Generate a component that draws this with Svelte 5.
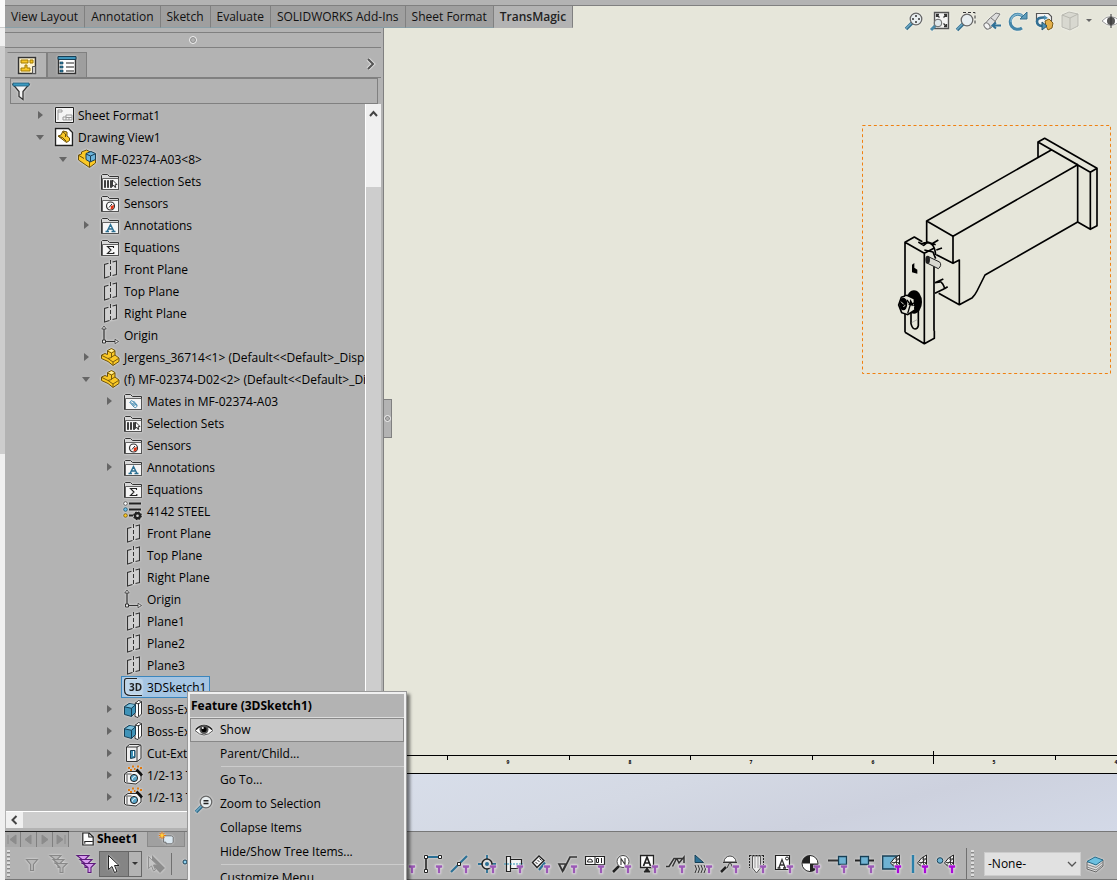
<script>
  const tabs = ['View Layout', 'Annotation', 'Sketch', 'Evaluate', 'SOLIDWORKS Add-Ins', 'Sheet Format', 'TransMagic'];

  const folder = '<path d="M1.5 18.5V4.500l1-1h5l2 2H18.500V18.500z" fill="#d8d8d8" stroke="#333"/><path d="M2.500 7.500H18.500V18.500H2.500z" fill="#f6f6f6" stroke="#444" stroke-width=".8"/>';
  const funnel = '<path d="M12.500 11h7v3h-2v5.500h-3V14h-2z" fill="#9b59b6" stroke="#ddd" stroke-width=".6"/>';
  const brightFunnel = funnel.replace('#9b59b6', '#a80ad8');
  const part = '<path d="M1.500 8l3.500-1.500 2.500 1V3.500l4-2 3.500 2V8l4 3v3.500L13 18.500l-5-4-6.500-3z" fill="#fbc926" stroke="#6b500a"/><path d="M2 8.500l6 3 5 3.500 5.500-3.500M7.500 4l4 2 3.500-2M11.500 6v4.500l-3.500 1M11.500 10l3.500-2M13 15v3" fill="none" stroke="#6b500a" stroke-width=".9"/><path d="M8.500 3.700l3-1.400 2.500 1.400-2.500 1.200z" fill="#fff0a0"/>';
  const lens = '<path d="M2 18l6-6" stroke="#336f8c" stroke-width="3.500"/><path d="M2 17.500l6-6" stroke="#6fa8c4" stroke-width="1.500"/><circle cx="12" cy="8" r="5.800" fill="#e8eef0" stroke="#666" stroke-width="1.300"/>';
  const hatch = '<path d="M8.500 9l4-5 5-3v11h-6z" fill="#eee" stroke="#222"/><path d="M10 8.500h7M13 5h4.500M14.500 3v9M10.500 11l7-7M14 12l4-4" stroke="#222" stroke-width=".8"/>';
  const boss = '<path d="M12 4.500l3.500-3 3 1V15l-3.500 3.500-3-1z" fill="#fff" stroke="#333"/><path d="M15.500 4v13.500M12 4l3.500 1 3-2.500" stroke="#333" fill="none"/><path d="M1.500 7.500L6 4.500l6.500 1v8l-4 4-7-2z" fill="#3f93b8" stroke="#173f55"/><path d="M2 8l5-3 5 1-4 3z" fill="#7cc0dc"/><path d="M1.500 7.800l7 1.500 4-3.500M8.500 9.500v8" stroke="#173f55" fill="none"/>';

  const icons = {
    sheet: '<path d="M1.500 2.500h18v15h-18z" fill="#f4f4f4" stroke="#222"/><path d="M4 15V5h4v2H4M9 15v-3h3v-2h6v5H9M12 12v3M12 12.500h6M15 12.500V15" fill="none" stroke="#999"/>',
    view: '<path d="M1.500 1.500h13l4 4v13h-17z" fill="#fff" stroke="#222" stroke-width="1.400"/><path d="M4 9l3-1 2-4 4 1v4l2.500 2v2.500l-3 2z" fill="#fbc926" stroke="#6b500a"/><path d="M4.500 9.500l4 1 4 4M9 5l2.500 2v3" fill="none" stroke="#6b500a"/>',
    asm: '<path d="M1.500 6l3-1V3l5-2 4 2 5 2v9l-6 4.500L1.500 11z" fill="#fbc926" stroke="#6b500a"/><path d="M9 4.500l5-2 4.500 2v6L13 13l-4-2.500z" fill="#6cb4dc" stroke="#183c52"/><path d="M9 5l4.500 2 4.500-2M13.500 7v5.500" stroke="#183c52" fill="none"/><path d="M2 6.500l5 3M12.500 13v5" stroke="#6b500a"/>',
    sets: folder + '<path d="M4.500 16.500v-7h1v7zM7.500 16.500v-7h1v7zM10.500 16.500v-7h1v7z" fill="#555" stroke="#333" stroke-width=".9"/><path d="M12.500 9l4.500 4.500-2 .3.800 2.500h-1l-1-2-1.300 1.200z" fill="#fff" stroke="#222" stroke-width=".9"/>',
    sensor: folder + '<circle cx="10.500" cy="13" r="4" fill="#fff" stroke="#333" stroke-width="1.200"/><path d="M11 13l3-1-.5 3.500-3 1z" fill="#e33212"/><path d="M9 14.500l3-3.500" stroke="#222"/>',
    ann: folder + '<path d="M5.500 16.500h3.500M11.500 16.500h4M7 16.500l3.500-7 3.500 7M8 14h5" fill="none" stroke="#2b6f92" stroke-width="1.400"/>',
    eq: folder + '<path d="M13.500 11V9.500H7.500l3.500 3.500-3.500 3.500h6.300V15" fill="none" stroke="#222" stroke-width="1.100"/>',
    plane: '<path d="M4.500 5.500l12-3.500v13.500l-12 3.500z" fill="#cfcfcf"/><path d="M8.500 4.300l-4 1.200V19l5-1.500M12.500 3l4-1v13.500l-4 1" fill="none" stroke="#333" stroke-width="1.100"/><path d="M10.500 1v18" stroke="#333" stroke-dasharray="4 2"/>',
    origin: '<path d="M4 4v11M6 16.500h9" stroke="#333" stroke-width="1.200"/><path d="M1.800 4L4 1l2.200 3zM15 14.300l3.500 2.200-3.500 2.200z" fill="#eee" stroke="#333" stroke-width=".8"/><path d="M2.500 15h3v3h-3z" fill="#eee" stroke="#333"/>',
    part,
    mates: folder + '<path d="M6.500 11l4.500 5c1.500 1.500 3.500 0 2.500-1.500L9.500 10c-1.500-1-2.500.3-1.500 1.500l3.500 3.500M9.500 12l2.500 2.500M10.500 10l4 4.500" fill="none" stroke="#2f7ea8" stroke-width=".9"/>',
    material: '<path d="M6 2.500h12M6 8.500h12M6 14.500h4" stroke="#222" stroke-width="2"/><circle cx="2.500" cy="2.500" r="1.800" fill="#fff" stroke="#444" stroke-width=".8"/><circle cx="2.500" cy="8.500" r="1.800" fill="#6cc0e8" stroke="#1a4c66" stroke-width=".8"/><circle cx="2.500" cy="14.500" r="1.800" fill="#fbc926" stroke="#6b500a" stroke-width=".8"/><circle cx="14.500" cy="14.800" r="2.500" fill="none" stroke="#222" stroke-width="2.400"/><circle cx="14.500" cy="14.800" r="3.800" fill="none" stroke="#222" stroke-width="1.200" stroke-dasharray="1.600 1.400"/>',
    sketch3d: '<path d="M3 3h16v14H8q-5 0-5-5z" fill="#bdd4e8"/><path d="M14 1.500H3.500Q1.500 1.500 1.500 4V13q0 5.500 6 5.500H19" fill="none" stroke="#222" stroke-width="1.200"/><text x="6" y="14" font-family="Open Sans" font-size="10" font-weight="700" fill="#222">3D</text>',
    boss,
    cut: '<path d="M3.500 4l3-2.500h10l1.500 1v13l-4 3H3.500z" fill="#eee" stroke="#333"/><path d="M3.500 4h10.500v14.500M14 4l4-2" fill="none" stroke="#333"/><path d="M7.500 7.500h4.500v7l-4.500 1z" fill="#3f93b8" stroke="#173f55"/><path d="M10.500 8v5" stroke="#fff"/>',
    wizard: '<path d="M1.500 9L5 6.500h11l2 1V15l-5 4-9.500-1-2-1z" fill="#f4f4f4" stroke="#333"/><path d="M1.500 9h7M4 17.500V9.500" fill="none" stroke="#555"/><circle cx="11" cy="13" r="3.600" fill="#5aa7cb" stroke="#222"/><path d="M9.500 14.500c0-2 1-3 3-3" fill="none" stroke="#fff"/><path d="M13.500 4.500l5.500 6" stroke="#111" stroke-width="2.600"/><path d="M5 3h2M9 1.500h2M7 5h2M14 1.500h2M11 4h1.500M17 3h2" stroke="#e07a10" stroke-width="1.800"/>',

    zoomFit: lens + '<path d="M12 4v2M12 10v2M8 8h2M14 8h2" stroke="#333" stroke-width="1.500"/>',
    zoomAll: '<path d="M4.500 1.500h14v16h-14z" fill="#f4f4f4" stroke="#555" stroke-width="1.400"/><path d="M6.500 3.500l3 3M16.500 3.500l-3 3M16.500 15.500l-3-3M6.500 6V3.500H9M14 3.500h2.500V6M16.500 13v2.500H14" stroke="#333" fill="none" stroke-width="1.300"/><path d="M1 19l5-5" stroke="#4a89a8" stroke-width="3"/><circle cx="8" cy="12" r="3.800" fill="#dfe7ea" stroke="#666"/>',
    zoomArea: '<path d="M7 1.500h12v12" fill="none" stroke="#333" stroke-dasharray="3 2"/><g transform="translate(-1 1)">' + lens + '</g>',
    prev: '<path d="M2 14l5-6 7-6 4 1-4 6-5 8q-4 2-7-3z" fill="#ddd" stroke="#777"/><ellipse cx="5" cy="15" rx="2.500" ry="3.500" transform="rotate(-40 5 15)" fill="#f2f2f2" stroke="#777"/><path d="M9 7l5 4" stroke="#777"/><path d="M19 14.500h-8M14 11.500l-3.500 3 3.500 3" stroke="#2f7198" stroke-width="2" fill="none"/>',
    rotate: '<path d="M15 5.500A7.500 7.500 0 1 0 14 17" fill="none" stroke="#4385a8" stroke-width="3"/><path d="M14.500 5A7 7 0 0 0 3 11" fill="none" stroke="#84b8d2" stroke-width="1.200"/><path d="M12 8h7V1z" fill="#5e9dbd" stroke="#356f8d"/>',
    rotate3d: '<path d="M2.500 11V2.500h12l3 3V12" fill="#f4f4f4" stroke="#555" stroke-width="1.200"/><path d="M11 10l4-2 4 4-1 5-4 2-2-4z" fill="#e3b04b" stroke="#7a5a15"/><path d="M11 6.500Q3 6 3 10.500T9 15" fill="none" stroke="#326f93" stroke-width="2.600"/><path d="M8 11v8l5-4z" fill="#4b8fb3" stroke="#25566f"/><path d="M10 4l4 3-4 2z" fill="#4b8fb3"/>',
    cube: '<path d="M2 4l7-3 9 2v12l-8 4-8-3z" fill="#d8d8d0" stroke="#b8b8b0"/><path d="M2 4l8 3 8-4M10 7v12" fill="none" stroke="#b8b8b0"/>',
    eyeHalf: '<path d="M1 10q8-9 18 0-9 9-18 0z" fill="#fff" stroke="#999"/><circle cx="10" cy="10" r="4" fill="#555"/><path d="M10 3v14" stroke="#333"/>',
    eye: '<path d="M1 10.500q9-10 18 0-9 9-18 0z" fill="#fff" stroke="#555"/><path d="M2 9.500q8-8 16 0" fill="none" stroke="#222" stroke-width="1.500"/><circle cx="10" cy="9.500" r="4.500" fill="#555"/><circle cx="10" cy="9.500" r="2.600" fill="#000"/><circle cx="8.800" cy="8" r="1" fill="#fff"/>',
    zoomSel: lens + '<path d="M9.500 6.800h5M9.500 9.500h5" stroke="#222" stroke-width="1.600"/>',

    edge: '<path d="M2 3h7M2 16h7" stroke="#2b7095" stroke-width="2"/>' + funnel,
    point: '<circle cx="5" cy="8" r="2" fill="#8fd0ee" stroke="#173f55"/>' + funnel,
    corner: '<path d="M3 3v14" stroke="#222" stroke-width="1.600"/><path d="M3 3h14" stroke="#2b7095" stroke-width="2"/><path d="M1.500 1.500h3v3h-3zM15.500 1.500h3v3h-3zM1.500 15.500h3v3h-3z" fill="#fff" stroke="#222"/>' + funnel,
    line: '<path d="M1 18L17 2" stroke="#2b7095" stroke-width="2.200"/><path d="M7.500 8.500h3v3h-3z" fill="#fff" stroke="#222"/>' + funnel,
    center: '<path d="M10 1v18M1 10h18" stroke="#2b7095" stroke-width="1.800"/><circle cx="10" cy="10" r="5" fill="#ddd" stroke="#222" stroke-width="1.500"/><circle cx="10" cy="10" r="2" fill="#2b7095"/>' + funnel,
    centerline: '<path d="M2.500 2.500h4v15h-4zM6.500 5.500h11v9h-11z" fill="#f4f4f4" stroke="#222" stroke-width="1.200"/><path d="M0 10h19" stroke="#2b90b8" stroke-dasharray="2 1"/>' + funnel,
    dim: '<path d="M1.500 8.500L8 2l5 4.500-7 7z" fill="#f4f4f4" stroke="#222" stroke-width="1.400"/><path d="M4.500 8l2 2M6.500 6l2 2M8.500 4.500l2 2" stroke="#333"/><path d="M8 16l6-7.500" stroke="#2b7095" stroke-width="2.200"/>' + funnel,
    finish: '<path d="M1 10h7l-3.500 7zM5 17L12 3h7" fill="none" stroke="#333" stroke-width="1.700"/>' + funnel,
    tol: '<path d="M.500 2.500h19v8H.500z" fill="#fff" stroke="#222" stroke-width="1.200"/><path d="M10 2.500v8M13.500 4.500v4h-2v-4zM16.500 4v5" fill="none" stroke="#222"/><path d="M2.500 8h5q0-3-2.500-3T2.500 8z" fill="none" stroke="#222"/>' + funnel,
    balloon: '<path d="M1 18l6-6" stroke="#222" stroke-width="2.500"/><circle cx="11" cy="7.500" r="6" fill="#fff" stroke="#444"/><path d="M9 11V4.500l4 6V4" stroke="#333" fill="none" stroke-width="1.100"/>' + funnel,
    datum: '<path d="M1.500 1.500h13v12h-13z" fill="#fff" stroke="#222" stroke-width="1.300"/><path d="M4.500 12l3.500-9 3.500 9M6 9h4" fill="none" stroke="#222" stroke-width="1.700"/><path d="M8 14l-3 4h6z" fill="#222" stroke="#222"/>' + funnel,
    weld: '<path d="M0 12.500h3L8 4.500h10M6.500 12.500l4-8M11 5l2 4 5-6v6" fill="none" stroke="#333" stroke-width="1.500"/>' + funnel,
    bead: '<path d="M2 1v7.500h8.500z" fill="#2b7095" stroke="#173f55"/><path d="M2 11q3 4 0 8M5 11q3 4 0 8M8 11q3 4 0 8M11 11q3 4 0 8" fill="none" stroke="#333"/>' + funnel,
    target: '<path d="M1 18l5-5" stroke="#222" stroke-width="2.500"/><path d="M4 8a6 6 0 0 1 12 0z" fill="#f8f8f8" stroke="#444"/><path d="M3 8.500h14M7 14l3-6 3 6" stroke="#333" fill="none"/>' + funnel,
    thread: '<path d="M5.500 2v12l4 5 4-5V2z" fill="#eee" stroke="#555"/><path d="M8 2v12M11 2v12" stroke="#999"/><path d="M2.500 1v13M16.500 1v13M2.500 1.500h14" stroke="#222" stroke-dasharray="2 1" fill="none"/>' + funnel,
    note: '<path d="M1.500 1.500h14v14h-14z" fill="#fff" stroke="#222" stroke-width="1.200"/><path d="M3.500 14h3M9 14h3M5 13.500l3-8 3 8M6 11h4" fill="none" stroke="#333" stroke-width="1.300"/><circle cx="13" cy="4.500" r="1.500" fill="none" stroke="#222"/>' + funnel,
    mass: '<circle cx="9" cy="9.500" r="8" fill="#fff" stroke="#222"/><path d="M9 1.500v8H1a8 8 0 0 1 8-8zM9 17.500v-8h8a8 8 0 0 1-8 8z" fill="#222"/>' + funnel,
    endBox: '<path d="M0 6.500h11" stroke="#333" stroke-width="2"/><path d="M10.500 2.500h8v8h-8z" fill="#6fb3d3" stroke="#173f55" stroke-width="1.300"/>' + funnel,
    midBox: '<path d="M0 6.500h19" stroke="#222" stroke-width="2"/><path d="M5.500 2.500h8v8h-8z" fill="#6fb3d3" stroke="#173f55" stroke-width="1.300"/>' + funnel,
    face: '<path d="M.700 2h16v13h-16z" fill="#6fb3d3" stroke="#173f55" stroke-width="1.300"/>' + hatch + brightFunnel,
    lineSeg: '<path d="M4 1v18" stroke="#2b80aa" stroke-width="2.500"/>' + hatch + brightFunnel,
    dot: '<circle cx="4" cy="6.500" r="2.800" fill="#6fb3d3" stroke="#173f55"/>' + hatch + brightFunnel,
    funnelOne: '<path d="M4.500 5.500h11l-4 5v6h-3v-6z" fill="#b8b8b8" stroke="#888" stroke-width="1.200"/>',
    funnels: '<g fill="#b8b8b8" stroke="#888" stroke-width="1.100"><path d="M1 1.500h11l-4 4v4H6v-4z"/><path d="M4 5.500h11l-4 4v4H9v-4z"/><path d="M7 9.500h11l-4 4v5h-3v-5z"/></g>',
    funnelsOn: '<g fill="#d99cf0" stroke="#5b1a7a" stroke-width="1.100"><path d="M1 1.500h12l-4 4v4H6v-4z"/><path d="M4 5.500h12l-4 4v4H9v-4z"/><path d="M7 9.500h12l-4 4v5h-3v-5z"/></g>',
    pointer: '<path d="M4.500 1.500v14l3.500-3 2.500 6 2.500-1-2.500-6h4.500z" fill="#fff" stroke="#222"/>',
    pointerOff: '<path d="M6 1l13 13-5 5L6 11z" fill="#8d8d8d"/><path d="M2.500 2.500v12l3-2.500 2 5 2-1-2-5h4z" fill="#c4c4c4" stroke="#909090"/>',
    layers: '<path d="M2 8v7l9 3 7-6V6z" fill="#ddd" stroke="#666"/><path d="M2 10.500l9 3 7-5.500M2 13l9 3 7-5.500" fill="none" stroke="#888"/><path d="M2 7.500L10 3l8 3-7 5z" fill="#6cc0e0" stroke="#246a88"/>',
    config: '<path d="M1.500 2.500h17v16h-17z" fill="#fff4d0" stroke="#333" stroke-width="1.500"/><path d="M4 5h7v3H4zM13 5h3v3h-3zM8 10h2v3h3v3H4v-3h4z" fill="#fbc926" stroke="#a07800"/><path d="M15.500 11.500h3v7h-3z" fill="#ccc" stroke="#555"/>',
    props: '<path d="M1.500 2.500h17v16h-17z" fill="#fff" stroke="#333" stroke-width="1.500"/><path d="M1 1.500h18v3H1z" fill="#3d94bb" stroke="#173f55"/><path d="M3 7h3v2H3zM3 11h3v2H3zM3 15h3v2H3z" fill="#2b7fa6" stroke="#173f55" stroke-width=".7"/><path d="M9 8h8M9 12h8M9 16h8" stroke="#222" stroke-width="1.200"/>',
    filter: '<path d="M2 3.500h16l-6 7v8l-4-3v-5z" fill="#f4f4f4" stroke="#333" stroke-width="1.300"/><path d="M2 2h16v3H2z" fill="#3d9ac0" stroke="#1d5876" stroke-width=".8"/>',
    addSheet: '<path d="M7 6h10l2 2v6l-2 2h-7v-2H7z" fill="#dce9f2" stroke="#555"/><path d="M5 1v9M1 5.500h9M2 2.500l6 6M8 2.500l-6 6" stroke="#e8780c" stroke-width="1.300"/><circle cx="5" cy="5.500" r="2" fill="#ffd23c"/>',
    page: '<path d="M3.500 2.500h8l5 5v10h-13z" fill="#fff" stroke="#222" stroke-width="1.500"/><path d="M11 2.500v5h5.500M6 16v-3h10" fill="none" stroke="#222" stroke-width="1.300"/>'
  };

  const tree = [
    [0, 'sheet', 'Sheet Format1', 'c'], [0, 'view', 'Drawing View1', 'o'], [1, 'asm', 'MF-02374-A03<8>', 'o'],
    [2, 'sets', 'Selection Sets'], [2, 'sensor', 'Sensors'], [2, 'ann', 'Annotations', 'c'], [2, 'eq', 'Equations'],
    [2, 'plane', 'Front Plane'], [2, 'plane', 'Top Plane'], [2, 'plane', 'Right Plane'], [2, 'origin', 'Origin'],
    [2, 'part', 'Jergens_36714<1> (Default<<Default>_Display', 'c'],
    [2, 'part', '(f) MF-02374-D02<2> (Default<<Default>_Disp', 'o'],
    [3, 'mates', 'Mates in MF-02374-A03', 'c'], [3, 'sets', 'Selection Sets'], [3, 'sensor', 'Sensors'],
    [3, 'ann', 'Annotations', 'c'], [3, 'eq', 'Equations'], [3, 'material', '4142 STEEL'],
    [3, 'plane', 'Front Plane'], [3, 'plane', 'Top Plane'], [3, 'plane', 'Right Plane'], [3, 'origin', 'Origin'],
    [3, 'plane', 'Plane1'], [3, 'plane', 'Plane2'], [3, 'plane', 'Plane3'], [3, 'sketch3d', '3DSketch1', '', true],
    [3, 'boss', 'Boss-Ext', 'c'], [3, 'boss', 'Boss-Ext', 'c'], [3, 'cut', 'Cut-Extr', 'c'],
    [3, 'wizard', '1/2-13 T', 'c'], [3, 'wizard', '1/2-13 T', 'c']
  ].map(([level, icon, label, state, selected]) => ({ level, icon, label, state, selected }));

  const viewTools = ['zoomFit', 'zoomAll', 'zoomArea', 'prev', 'rotate', 'rotate3d', 'cube'];
  const filters = [
    'point', 'line', 'edge', 'face', 'corner', 'center', 'dim', 'note', 'edge', 'corner', 'line', 'center', 'centerline',
    'dim', 'finish', 'tol', 'balloon', 'datum', 'weld', 'bead', 'target', 'thread', 'note', 'mass', 'endBox', 'midBox',
    'face', 'lineSeg', 'dot'
  ];
  const zones = [['9', 124], ['8', 246], ['7', 367], ['6', 489], ['5', 610], ['4', 732]];
  const navs = ['M3 3v9M11 3v9L5 7.500z', 'M10 3v9L4 7.500z', 'M5 3v9l6-4.500z', 'M12 3v9M4 3v9l6-4.500z'];
</script>

{#snippet icon(name)}
  <svg class="icon" viewBox="0 0 20 20" aria-hidden="true">{@html icons[name]}</svg>
{/snippet}

<div class="app">
  <div class="edge"><i class="e1"></i><i class="e2"></i><i class="e3"></i><i class="e4"></i></div>
  <div class="main">
    <header>
      <nav class="tabs">
        {#each tabs as t, i}
          <button class:active={i === 6}>{t}</button>
        {/each}
      </nav>
      <div class="viewbar">
        {#each viewTools as v}
          <button class="tool" aria-label={v}>{@render icon(v)}</button>
        {/each}
        <span class="drop"></span>
        <button class="tool" aria-label="Display">{@render icon('eyeHalf')}</button>
      </div>
    </header>

    <div class="body">
      <aside>
        <div class="handle"><span class="ring"></span></div>
        <div class="ptabs">
          <button class="on" aria-label="Tree">{@render icon('config')}</button>
          <button aria-label="Properties">{@render icon('props')}</button>
          <svg class="more" viewBox="0 0 10 12" aria-hidden="true"><path d="M2 1l5 5-5 5" fill="none" stroke="#ddd" stroke-width="4" /><path d="M2 1l5 5-5 5" fill="none" stroke="#555" stroke-width="2" /></svg>
        </div>
        <label class="filter">{@render icon('filter')}<input type="text" aria-label="Filter" /></label>
        <div class="scroller">
          <ul>
            {#each tree as n}
              <li style="--level: {n.level}">
                <span class="arrow {n.state}"></span>
                <span class="node" class:selected={n.selected}>{@render icon(n.icon)}<span class="label">{n.label}</span></span>
              </li>
            {/each}
          </ul>
          <div class="vbar">
            <svg viewBox="0 0 15 83" aria-hidden="true"><path d="M4 12l3.500-4 3.500 4" fill="none" stroke="#444" stroke-width="2" /></svg>
          </div>
        </div>
        <div class="hbar">
          <svg viewBox="0 0 17 16" aria-hidden="true"><path d="M10.500 4l-4 4 4 4" fill="none" stroke="#444" stroke-width="2" /></svg>
        </div>
      </aside>

      <section class="canvas">
        <div class="splitter"><span class="ring"></span></div>
        <svg class="drawing" viewBox="21 15 747 747" role="img" aria-label="Drawing view">
          <rect x="22.500" y="16.500" width="744" height="744" fill="none" stroke="#f08010" stroke-width="3" stroke-dasharray="9 8" />
          <g fill="none" stroke="#000" stroke-width="5" stroke-linejoin="round">
            <path d="M549 112V66l20-11 157 90v172l-20 11-38-22V134L294 349l-79-46 375-214M549 66l157 91v171M706 157l20-12M549 66l119 68" />
            <path d="M215 303v64M294 349v81l19-10v134l-62-34M294 430l-50-26M313 554l39-21q8-8 14-20l24-48 278-159" />
            <path d="M150 637V367l28-16 24 14M150 367l58 33v271l-58-34M208 400l30-16M208 671l30-16v-23M237 420v212" />
            <path d="M200 371q38-14 42 34M190 366l16 10 12-10 24 8M230 372l20-12M244 390l17-6M240 488l25-11M240 520l28-14 10-6M252 483q14 5 17 25M240 488l15-2" />
            <path d="M208 390l26 6 8 20" />
            <path d="M168 575v36q4 16 12 16t10-10v-45" />
          </g>
          <path d="M171 434l7-5v14l9 6v12l-16-4z" />
          <path d="M220 410l34 16q8 10-4 20l-36-18z" fill="#d8d8d0" stroke="#222" stroke-width="3" />
          <ellipse cx="218" cy="419" rx="7" ry="12" fill="#222" />
          <ellipse cx="177" cy="546" rx="24" ry="35" fill="#000" />
          <path d="M139 532l17-6 22 10 2 34-22 14-18-6-9-23z" fill="#e6e6da" stroke="#000" stroke-width="5" />
          <ellipse cx="145" cy="552" rx="12" ry="19" fill="#000" />
          <path d="M138 545l8 8M145 560l6-4M166 536l-8 20 20 4M152 528l12 20" stroke="#e6e6da" stroke-width="3" />
          <path d="M156 540l10 14-8 26M166 554l14-6" fill="none" stroke="#000" stroke-width="4" />
          <path d="M170 608l18-10" stroke="#999" stroke-width="2" />
        </svg>
        <div class="ruler">
          <svg viewBox="0 0 733 24" aria-hidden="true">
            <path d="M63.500 5v4M185.500 5v4M306.500 5v4M428.500 5v4M549.500 0v13M671.500 5v4" stroke="#000" />
            {#each zones as [z, x]}
              <text {x} y="13" font-size="5" font-weight="700" text-anchor="middle">{z}</text>
            {/each}
          </svg>
        </div>
        <div class="sky"></div>
      </section>
    </div>

    <footer>
      <div class="sheets">
        <div class="navs">
          {#each navs as d}
            <button aria-label="Sheet navigation"><svg viewBox="0 0 15 15"><path {d} fill="#8c8c8c" stroke="#8c8c8c" /></svg></button>
          {/each}
        </div>
        <button class="sheet">{@render icon('page')}Sheet1</button>
        <button class="add" aria-label="Add sheet">{@render icon('addSheet')}</button>
      </div>
      <div class="bar">
        <span class="grip"></span>
        <div class="lead">
          <button class="tool" aria-label="Filter">{@render icon('funnelOne')}</button>
          <button class="tool" aria-label="Clear filters">{@render icon('funnels')}</button>
          <button class="tool" aria-label="All filters">{@render icon('funnelsOn')}</button>
        </div>
        <div class="select"><button class="pick" aria-label="Select">{@render icon('pointer')}</button><button class="caret" aria-label="Select options"><span class="drop"></span></button></div>
        <button class="tool" aria-label="Pointer">{@render icon('pointerOff')}</button>
        <span class="rule"></span>
        <div class="filters">
          {#each filters as f}
            <button class="tool" aria-label={f}>{@render icon(f)}</button>
          {/each}
        </div>
        <span class="rule tall"></span>
        <span class="grip"></span>
        <div class="layer">
          <select aria-label="Layer"><option>-None-</option></select>
          <svg viewBox="0 0 10 6" aria-hidden="true"><path d="M1 1l4 4 4-4" fill="none" stroke="#555" stroke-width="1.300" /></svg>
        </div>
        <button class="tool" aria-label="Layer properties">{@render icon('layers')}</button>
      </div>
    </footer>
  </div>

  <div class="menu">
    <div class="inner">
      <h2>Feature (3DSketch1)</h2>
      <button class="hot">{@render icon('eye')}Show</button>
      <button><i></i>Parent/Child...</button>
      <hr />
      <button><i></i>Go To...</button>
      <button>{@render icon('zoomSel')}Zoom to Selection</button>
      <button><i></i>Collapse Items</button>
      <button><i></i>Hide/Show Tree Items...</button>
      <hr />
      <button><i></i>Customize Menu</button>
    </div>
  </div>
</div>

<style>
  :global(body) { overflow: hidden; }
  .app, .app * { box-sizing: border-box; }
  .app {
    position: relative; display: flex; height: 100vh; overflow: hidden;
    background: #b3b3b3; color: #000; font: 12px/16px "Open Sans", "Noto Sans", sans-serif;
  }
  button { border: 0; padding: 0; margin: 0; background: none; color: inherit; font: inherit; }
  .icon { width: 20px; height: 20px; flex: none; overflow: visible; filter: drop-shadow(0 0 1px rgba(255, 255, 255, .7)); }
  .edge { display: flex; flex-direction: column; width: 5px; flex: none; }
  .e1 { height: 28px; background: #fafafa; border-bottom: 1px solid #ccc; }
  .e2 { height: 18px; background: #f0f0f0; }
  .e3 { height: 408px; background: #cdcdcd; }
  .e4 { flex: 1; background: #f0f0f0; }
  .main { flex: 1; min-width: 0; display: flex; flex-direction: column; }

  header { position: relative; z-index: 1; display: flex; height: 28px; flex: none; border-top: 5px solid #b3b3b3; }
  .tabs { display: flex; border-top: 1px solid #808080; }
  .tabs button { padding: 0 6px; background: #9f9f9f; border-right: 1px solid #808080; border-bottom: 1px solid #8aa0a8; color: #111; white-space: nowrap; }
  .tabs .active { background: #b3b3b3; border-bottom-color: #b3b3b3; font-weight: 600; color: #222; }
  .viewbar { flex: 1; display: flex; justify-content: flex-end; align-items: flex-start; gap: 6px; padding-top: 5px; margin-right: -4px; background: #e6e6da; border-top: 1px solid #808080; }
  .tool { display: flex; flex: none; }
  .drop { border: 3px solid transparent; border-top-color: #666; border-bottom: 0; }
  .viewbar .drop { margin: 8px 3px 0 0; }

  .body { flex: 1; min-height: 0; display: flex; }
  aside { width: 379px; flex: none; display: flex; flex-direction: column; border-right: 1px solid #808080; padding-right: 2px; }
  .handle { height: 16px; margin-top: 4px; border-top: 1px solid #808080; border-bottom: 1px solid #808080; display: flex; align-items: center; justify-content: center; }
  .ring { width: 8px; height: 8px; border: 1px solid #eee; border-radius: 50%; background: #b3b3b3; box-shadow: inset 0 0 0 1px #888; }
  .ptabs { display: flex; align-items: flex-end; height: 30px; padding-left: 2px; border-bottom: 1px solid #808080; }
  .ptabs button { width: 40px; height: 25px; display: flex; align-items: center; justify-content: center; border: 1px solid #808080; border-bottom: 0; background: #9e9e9e; }
  .ptabs .on { background: #b3b3b3; border-left-color: #b3b3b3; }
  .more { width: 10px; height: 12px; margin: 0 5px 7px auto; }
  .filter { display: flex; align-items: center; height: 26px; margin: 0 3px 0 5px; border: 1px solid #808080; }
  .filter input { flex: 1; min-width: 0; border: 0; background: none; font: inherit; outline: 0; }
  .scroller { flex: 1; min-height: 0; display: flex; overflow: hidden; }
  ul { flex: 1; min-width: 0; margin: 0; padding: 0; list-style: none; overflow: hidden; }
  li { display: flex; align-items: center; height: 22px; padding-left: calc(28px + var(--level) * 23px); white-space: nowrap; }
  .arrow { width: 14px; margin-right: 5px; flex: none; display: flex; justify-content: center; }
  .arrow::before { content: ""; border: 4px solid transparent; }
  .arrow.c::before { border-left: 5px solid #666; border-right: 0; }
  .arrow.o::before { border-top: 5px solid #666; border-bottom: 0; }
  .node { display: flex; align-items: center; gap: 4px; height: 22px; padding: 0 3px 0 1px; border: 1px solid transparent; }
  .label { padding-top: 2px; }
  .selected { background: #a5c5e3; border-color: #3c86bd; }
  .vbar { width: 16px; flex: none; background: #cdcdcd; border-left: 1px solid #fff; }
  .vbar svg { display: block; width: 15px; height: 83px; background: #f0f0f0; }
  .hbar { height: 17px; margin: 0 0 3px 1px; flex: none; background: #cdcdcd; border-top: 1px solid #fff; }
  .hbar svg { display: block; width: 17px; height: 16px; background: #f0f0f0; }

  .canvas { position: relative; flex: 1; min-width: 0; display: flex; flex-direction: column; justify-content: flex-end; overflow: hidden; background: #e6e6da; }
  .splitter { position: absolute; left: 0; top: 371px; width: 8px; height: 39px; display: flex; align-items: center; background: #b3b3b3; border: 1px solid #808080; border-left: 0; }
  .splitter .ring { width: 7px; height: 7px; }
  .drawing { position: absolute; top: 97px; right: 6px; width: 249px; height: 249px; }
  .ruler { height: 19px; flex: none; border-top: 1px solid #000; border-bottom: 1px solid #000; }
  .ruler svg { display: block; width: 733px; height: 24px; margin-top: -5px; }
  .sky { height: 57px; flex: none; background: linear-gradient(165deg, #d8deea 0%, #d4d9e4 35%, #cdd1de 65%, #d3d9e7 100%); }

  footer { flex: none; border-top: 1px solid #777; }
  .sheets { display: flex; height: 16px; }
  .navs { display: flex; margin-top: -1px; border-top: 1px solid #222; }
  .navs button { display: flex; width: 16px; height: 15px; background: #a9a9a9; border-right: 1px solid #808080; }
  .navs svg { width: 15px; height: 15px; }
  .sheet { display: flex; align-items: center; padding: 0 9px 2px 10px; font-weight: 700; }
  .sheet .icon, .add .icon { width: 18px; height: 16px; }
  .add { width: 38px; display: flex; align-items: center; justify-content: center; background: #a0a0a0; border: 1px solid #8a8a8a; border-top: 0; height: 15px; }
  .bar { display: flex; align-items: center; height: 32px; padding-left: 2px; border-bottom: 1px solid #777; }
  .grip { width: 3px; height: 27px; flex: none; background: repeating-linear-gradient(#ddd 0 2px, #888 2px 3px, transparent 3px 4px); }
  .lead { display: flex; gap: 7px; margin: 0 3px 0 12px; }
  .select { display: flex; height: 26px; margin-right: 4px; border: 1px solid #666; }
  .pick { width: 28px; display: flex; align-items: center; justify-content: center; background: #858585; }
  .caret { width: 13px; border-left: 1px solid #666; display: flex; align-items: center; justify-content: center; }
  .caret .drop { border-top-color: #333; }
  .rule { width: 1px; height: 22px; margin: 0 8px 0 5px; flex: none; background: #707070; }
  .rule.tall { height: 31px; margin: 0 4px 0 10px; }
  .filters { display: flex; gap: 7px; }
  .layer { position: relative; width: 97px; margin: 0 4px 0 10px; flex: none; }
  .layer select { display: block; width: 100%; height: 24px; appearance: none; border: 1px solid #ccc; border-radius: 0; background: #e1e1e1; padding: 0 3px; color: #000; font: inherit; }
  .layer svg { position: absolute; right: 4px; top: 9px; width: 10px; height: 6px; pointer-events: none; }

  .menu { position: absolute; z-index: 2; left: 187px; top: 691px; width: 220px; padding: 2px; background: #f0f0f0; border: 1px solid #999; box-shadow: 3px 3px 3px rgba(0, 0, 0, .5); }
  .inner { background: #b3b3b3; }
  .menu h2 { margin: 0; height: 24px; padding-left: 1px; font: 700 12px/23px "Open Sans", sans-serif; border-bottom: 1px solid #ddd; }
  .menu button { display: flex; align-items: center; gap: 6px; width: 100%; height: 24px; padding-left: 4px; text-align: left; }
  .menu i { width: 20px; }
  .menu .hot { padding-left: 3px; background: #c8c8c8; border: 1px solid #888; }
  .menu hr { height: 1px; margin: 0 0 1px 31px; border: 0; background: #ccc; }
</style>
